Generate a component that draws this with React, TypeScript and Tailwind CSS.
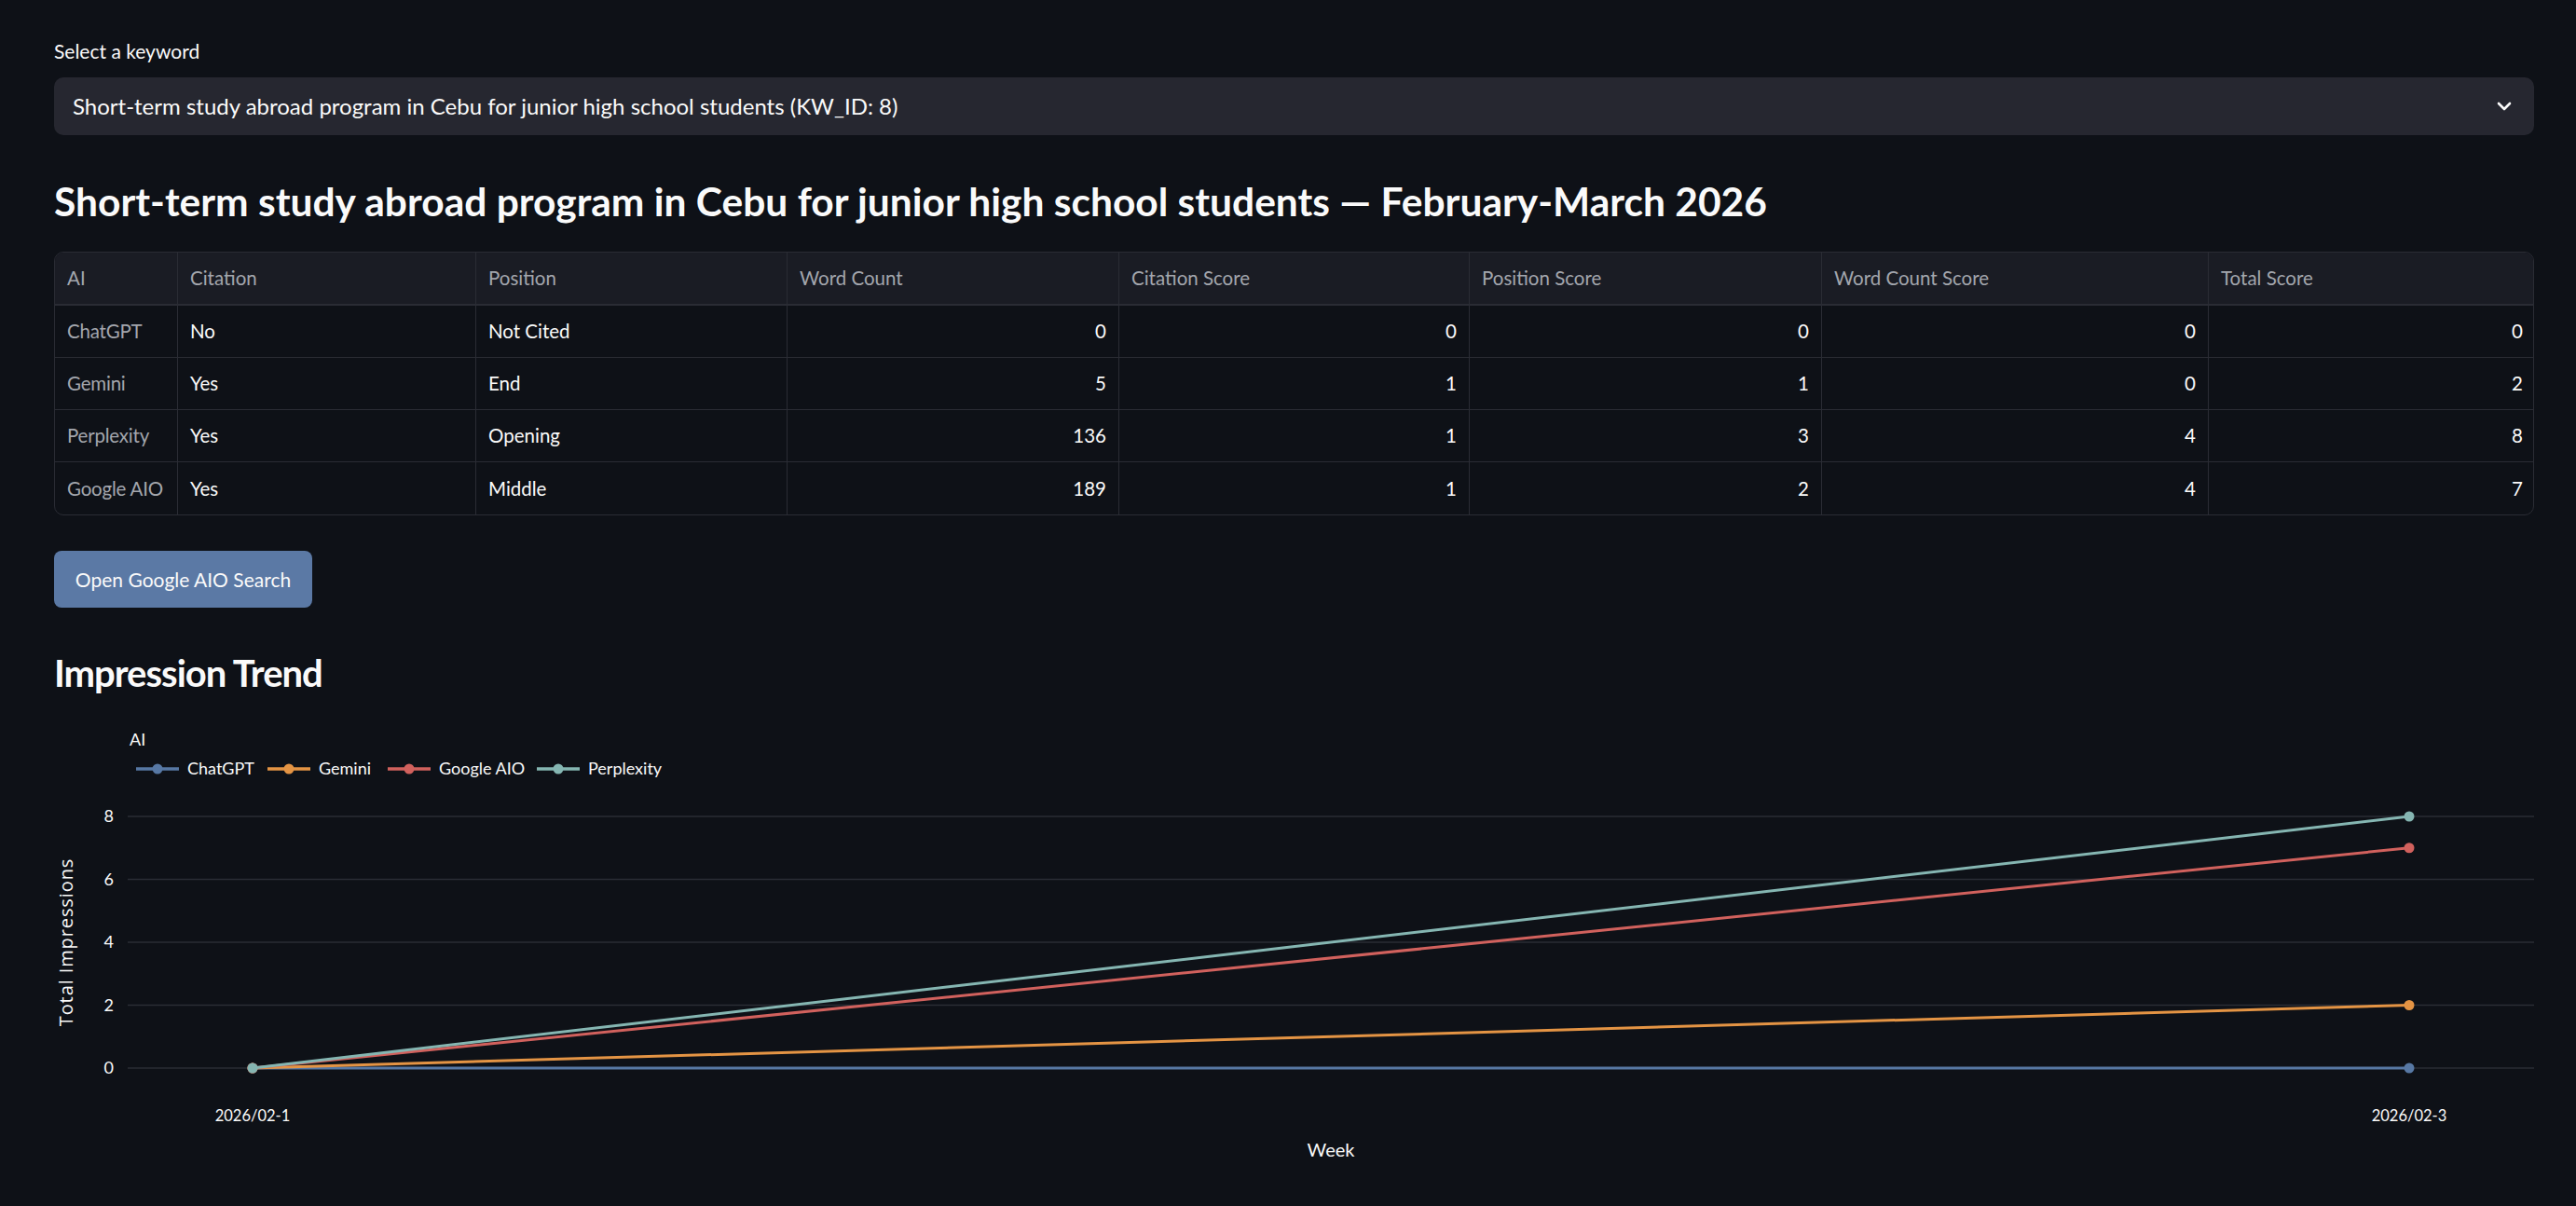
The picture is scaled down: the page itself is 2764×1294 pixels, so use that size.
import * as React from 'react';

// Keyword report page: selector, score table, action button and impression trend chart.

type Row = {
  ai: string;
  citation: string;
  position: string;
  words: number;
  citationScore: number;
  positionScore: number;
  wordScore: number;
  total: number;
};

const ROWS: Row[] = [
  { ai: 'ChatGPT', citation: 'No', position: 'Not Cited', words: 0, citationScore: 0, positionScore: 0, wordScore: 0, total: 0 },
  { ai: 'Gemini', citation: 'Yes', position: 'End', words: 5, citationScore: 1, positionScore: 1, wordScore: 0, total: 2 },
  { ai: 'Perplexity', citation: 'Yes', position: 'Opening', words: 136, citationScore: 1, positionScore: 3, wordScore: 4, total: 8 },
  { ai: 'Google AIO', citation: 'Yes', position: 'Middle', words: 189, citationScore: 1, positionScore: 2, wordScore: 4, total: 7 },
];

const HEADERS = ['AI', 'Citation', 'Position', 'Word Count', 'Citation Score', 'Position Score', 'Word Count Score', 'Total Score'];

const SERIES = [
  { name: 'ChatGPT', color: '#5778a4', values: [0, 0] },
  { name: 'Gemini', color: '#e49444', values: [0, 2] },
  { name: 'Google AIO', color: '#d1615d', values: [0, 7] },
  { name: 'Perplexity', color: '#85b6b2', values: [0, 8] },
];

const FONT = "font-['Lato','Noto_Sans',sans-serif]";

function KeywordSelect(): React.JSX.Element {
  return (
    <div className="flex flex-col">
      <label className="text-[21px] leading-[30px] text-[#fafafa]">Select a keyword</label>
      <div className="mt-[13px] flex h-[62px] items-center justify-between rounded-[10px] bg-[#262730] pl-[20px] pr-[24px]">
        <span className="text-[24px] text-[#fafafa]">
          Short-term study abroad program in Cebu for junior high school students (KW_ID: 8)
        </span>
        <svg width="16" height="10" viewBox="0 0 16 10" fill="none">
          <path d="M2 2 L8 8 L14 2" stroke="#fafafa" strokeWidth="2.6" strokeLinecap="round" strokeLinejoin="round" />
        </svg>
      </div>
    </div>
  );
}

function ScoreTable(): React.JSX.Element {
  const cols = 'grid grid-cols-[131px_320px_334px_356px_376px_378px_415px_351px]';
  return (
    <div className="overflow-hidden rounded-[10px] border border-[#2a2c34]">
      <div className={`${cols} h-[57px] border-b-2 border-[#2a2c34] bg-[#1a1c24]`}>
        {HEADERS.map((h, i) => (
          <div
            key={h}
            className={`flex items-center whitespace-nowrap px-[13px] text-[20.5px] text-[#a3a6ad] ${i > 0 ? 'border-l border-[#2a2c34]' : ''}`}
          >
            {h}
          </div>
        ))}
      </div>
      {ROWS.map((r, ri) => {
        const cells = [r.citation, r.position, r.words, r.citationScore, r.positionScore, r.wordScore, r.total];
        return (
          <div key={r.ai} className={`${cols} h-[56px] ${ri < ROWS.length - 1 ? 'border-b border-[#2a2c34]' : ''}`}>
            <div className="flex items-center whitespace-nowrap pl-[13px] pr-[6px] text-[20.5px] tracking-[-0.01em] text-[#a3a6ad]">
              {r.ai}
            </div>
            {cells.map((c, ci) => (
              <div
                key={ci}
                className={`flex items-center whitespace-nowrap border-l border-[#2a2c34] px-[13px] text-[20.5px] text-[#fafafa] ${
                  typeof c === 'number' ? 'justify-end' : ''
                }`}
              >
                {c}
              </div>
            ))}
          </div>
        );
      })}
    </div>
  );
}

function TrendChart(): React.JSX.Element {
  // coordinates in page pixels; viewBox starts at the chart's page offset
  const x0 = 271;
  const x1 = 2585;
  const y = (v: number): number => 1146 - v * 33.75;
  const ticks = [0, 2, 4, 6, 8];
  const legendX = [146, 287, 416, 576];

  return (
    <svg width="2661" height="500" viewBox="58 770 2661 500" className="block">
      <text x="139" y="800" fill="#fafafa" fontSize="18" fontFamily="Lato, sans-serif">AI</text>
      {SERIES.map((s, i) => (
        <g key={s.name}>
          <line x1={legendX[i]} y1="825" x2={legendX[i] + 46} y2="825" stroke={s.color} strokeWidth="3.5" />
          <circle cx={legendX[i] + 23} cy="825" r="5.5" fill={s.color} />
          <text x={legendX[i] + 55} y="831" fill="#fafafa" fontSize="18" fontFamily="Lato, sans-serif">
            {s.name}
          </text>
        </g>
      ))}

      {ticks.map((t) => (
        <g key={t}>
          <line x1="137" y1={y(t)} x2="2720" y2={y(t)} stroke="#2a2d35" strokeWidth="1.6" />
          <text x="122" y={y(t) + 6} textAnchor="end" fill="#fafafa" fontSize="18" fontFamily="Lato, sans-serif">
            {t}
          </text>
        </g>
      ))}

      <text
        x="73"
        y="1011"
        transform="rotate(-90 73 1011)"
        textAnchor="middle"
        dominantBaseline="middle"
        fill="#fafafa"
        fontSize="20"
        letterSpacing="0.9"
        fontFamily="'Open Sans', sans-serif"
      >
        Total Impressions
      </text>

      {SERIES.map((s) => (
        <g key={s.name}>
          <line x1={x0} y1={y(s.values[0])} x2={x1} y2={y(s.values[1])} stroke={s.color} strokeWidth="3" />
          <circle cx={x0} cy={y(s.values[0])} r="5.5" fill={s.color} />
          <circle cx={x1} cy={y(s.values[1])} r="5.5" fill={s.color} />
        </g>
      ))}

      <text x={x0} y="1203" textAnchor="middle" fill="#fafafa" fontSize="16.5" fontFamily="Lato, sans-serif">2026/02-1</text>
      <text x={x1} y="1203" textAnchor="middle" fill="#fafafa" fontSize="16.5" fontFamily="Lato, sans-serif">2026/02-3</text>
      <text x="1428" y="1241" textAnchor="middle" fill="#fafafa" fontSize="20" fontFamily="Lato, sans-serif">Week</text>
    </svg>
  );
}

export default function App(): React.JSX.Element {
  return (
    <div className={`min-h-screen w-full bg-[#0e1117] ${FONT}`}>
      <div className="ml-[58px] flex w-[2661px] flex-col pt-[40px]">
        <KeywordSelect />
        <h2 className="mt-[44px] h-[54px] text-[42.5px] font-bold leading-[54px] text-[#fafafa]">
          Short-term study abroad program in Cebu for junior high school students — February-March 2026
        </h2>
        <div className="mt-[27px]">
          <ScoreTable />
        </div>
        <div className="mt-[38px]">
          <button
            type="button"
            className="flex h-[61px] w-[277px] items-center justify-center rounded-[8px] bg-[#5b79a5] text-[21px] text-[#fafafa]"
          >
            Open Google AIO Search
          </button>
        </div>
        <h2 className="mt-[43px] h-[54px] text-[40px] font-bold leading-[54px] tracking-[-0.025em] text-[#fafafa]">
          Impression Trend
        </h2>
        <div className="mt-[21px]">
          <TrendChart />
        </div>
      </div>
    </div>
  );
}
